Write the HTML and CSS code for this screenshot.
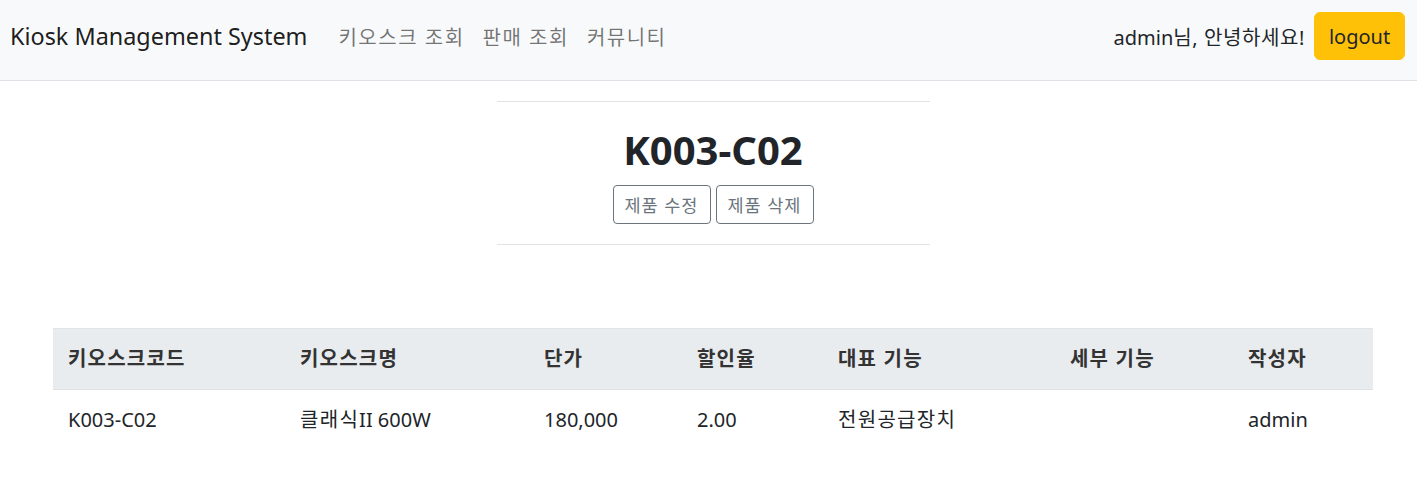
FILE: index.html
```html
<!DOCTYPE html>
<html lang="ko">
<head>
<meta charset="utf-8">
<title>Kiosk Management System</title>
<link rel="stylesheet" href="styles.css">
</head>
<body>
<nav class="navbar">
  <a class="brand" href="#">Kiosk Management System</a>
  <ul class="nav-links">
    <li><a href="#">키오스크 조회</a></li>
    <li><a href="#">판매 조회</a></li>
    <li><a href="#">커뮤니티</a></li>
  </ul>
  <div class="nav-right">
    <span class="greeting">admin<span class="ko-tight">님, 안녕하세요!</span></span>
    <button class="btn-logout">logout</button>
  </div>
</nav>
<main class="main">
  <section class="title-block">
    <hr class="rule">
    <h2 class="title">K003-C02</h2>
    <div class="actions">
      <button class="btn-outline">제품 수정</button>
      <button class="btn-outline">제품 삭제</button>
    </div>
    <hr class="rule">
  </section>
  <table class="table">
    <colgroup>
      <col style="width:232px"><col style="width:244px"><col style="width:153px"><col style="width:141px"><col style="width:232px"><col style="width:178px"><col style="width:140px">
    </colgroup>
    <thead>
      <tr><th>키오스크코드</th><th>키오스크명</th><th>단가</th><th>할인율</th><th>대표 기능</th><th>세부 기능</th><th>작성자</th></tr>
    </thead>
    <tbody>
      <tr><td>K003-C02</td><td><span class="ko">클래식</span>II 600W</td><td>180,000</td><td>2.00</td><td class="ko">전원공급장치</td><td></td><td>admin</td></tr>
    </tbody>
  </table>
</main>
</body>
</html>
```
FILE: styles.css
```css
* { box-sizing: border-box; }
body {
  margin: 0;
  font-family: "Noto Sans", "Noto Sans CJK KR", sans-serif;
  font-size: 20px;
  color: #212529;
  background: #fff;
}
.ko { letter-spacing: 1.3px; }
.ko-tight { letter-spacing: 0.6px; }
.navbar {
  display: flex;
  align-items: center;
  height: 81px;
  padding: 0 12px 8px 10px;
  background: #f8f9fa;
  border-bottom: 1px solid #dee2e6;
}
.brand {
  font-size: 23.4px;
  color: rgba(0,0,0,.9);
  text-decoration: none;
  margin-right: 31px;
}
.nav-links {
  display: flex;
  list-style: none;
  margin: 0;
  padding: 0;
  gap: 18px;
}
.nav-links a {
  color: rgba(0,0,0,.55);
  text-decoration: none;
  font-size: 20px;
  letter-spacing: 1.5px;
}
.nav-right {
  margin-left: auto;
  display: flex;
  align-items: center;
  gap: 9px;
}
.greeting { font-size: 20px; color: #212529; }
.btn-logout {
  font-family: inherit;
  font-size: 20px;
  color: #212529;
  background: #ffc107;
  border: 1px solid #ffc107;
  border-radius: 6px;
  height: 48px;
  width: 91px;
  padding: 0;
}
.main {
  width: 1320px;
  margin-left: 53px;
}
.title-block {
  width: 433px;
  margin: 20px auto 0;
  text-align: center;
}
.rule {
  border: 0;
  border-top: 1px solid #e3e3e3;
  margin: 0;
}
.title {
  margin: 24px 0 11px;
  font-size: 40px;
  font-weight: 700;
  line-height: 1.2;
}
.actions {
  display: flex;
  justify-content: center;
  gap: 5px;
  margin-bottom: 20px;
}
.btn-outline {
  font-family: inherit;
  font-size: 17.5px;
  letter-spacing: 1px;
  color: #6c757d;
  background: #fff;
  border: 1px solid #6c757d;
  border-radius: 4px;
  height: 39px;
  width: 98px;
  padding: 0;
}
.table {
  width: 1320px;
  margin-top: 83px;
  border-collapse: collapse;
  table-layout: fixed;
}
.table th, .table td {
  text-align: left;
  padding: 15px;
  line-height: 30px;
  border-bottom: 1px solid #dee2e6;
}
.table th {
  background: #e9ecef;
  font-weight: 700;
  color: #333;
  letter-spacing: 1.2px;
  border-top: 1px solid #e2e5e8;
}
.table td { border-bottom: none; }
```
